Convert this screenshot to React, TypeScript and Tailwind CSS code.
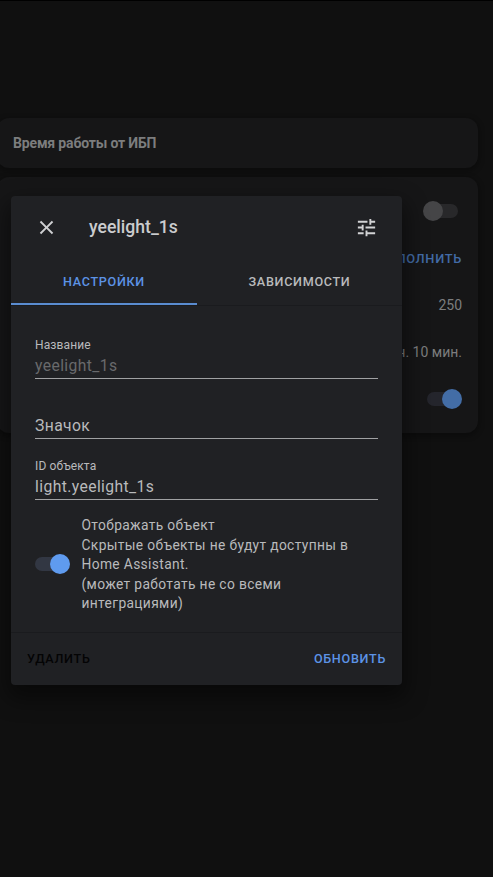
import React from "react";

type ToggleProps = { on: boolean; track: string; knob: string };

function Toggle({ on, track, knob }: ToggleProps) {
  return (
    <div className={`relative flex h-5 w-[35px] items-center ${on ? "justify-end" : "justify-start"}`}>
      <div
        className={`absolute h-3.5 w-[33px] rounded-full ${on ? "left-0" : "right-0"} ${track}`}
      />
      <div className={`relative size-5 rounded-full ${knob}`} />
    </div>
  );
}

type FieldProps = { label?: string; value: string; tone: string };

function Field({ label, value, tone }: FieldProps) {
  return (
    <div className="flex h-[53px] flex-col justify-end border-b border-[#a0a1a3] pb-[2px]">
      {label && (
        <div className="mb-[2px] text-[12px] leading-[18px] tracking-[0.12px] text-[#b9babc]">
          {label}
        </div>
      )}
      <div className={`text-[15.7px] leading-5 tracking-[0.4px] whitespace-nowrap ${tone}`}>
        {value}
      </div>
    </div>
  );
}

function Background() {
  return (
    <div className="flex flex-col gap-[9px] pt-[118px]">
      <section className="-ml-[3px] mr-[15px] flex h-[50px] items-center rounded-xl bg-[#161617] pl-4 shadow-[0_2px_5px_2px_rgba(0,0,0,0.25)]">
        <h2 className="text-[14px] font-bold leading-5 tracking-[-0.16px] text-[#7c7d7e]">
          Время работы от ИБП
        </h2>
      </section>
      <section className="-ml-[3px] mr-[15px] flex h-[256px] flex-col items-end rounded-xl bg-[#161617] pr-4 pt-[11px] text-[14px] text-[#7c7d7e] shadow-[0_2px_5px_2px_rgba(0,0,0,0.25)]">
        <div className="mr-1 flex h-[46px] items-center">
          <Toggle on={false} track="bg-[#28282a]" knob="bg-[#454547]" />
        </div>
        <div className="flex h-[48px] items-center pt-px text-[12.8px] font-medium tracking-[0.7px] text-[#426ba6]">
          ВЫПОЛНИТЬ
        </div>
        <div className="flex h-[47px] items-center">250</div>
        <div className="flex h-[47px] items-center">2 ч. 10 мин.</div>
        <div className="flex h-[46px] items-center">
          <Toggle on track="bg-[#24252c]" knob="bg-[#436da6]" />
        </div>
      </section>
    </div>
  );
}

function Dialog() {
  return (
    <div
      role="dialog"
      className="absolute left-[11px] top-[196px] flex h-[489px] w-[391px] flex-col rounded bg-[#202124] shadow-[0_10px_22px_4px_rgba(0,0,0,0.45)]"
    >
      <header className="flex h-[62px] items-center pl-[24px] pr-[24px]">
        <svg className="size-[23px]" viewBox="0 0 24 24" fill="#cfd0d2">
          <path d="M19,6.41L17.59,5L12,10.59L6.41,5L5,6.41L10.59,12L5,17.59L6.41,19L12,13.41L17.59,19L19,17.59L13.41,12L19,6.41Z" />
        </svg>
        <h1 className="ml-[31px] flex-1 text-[17.6px] font-medium leading-6 text-[#cbccce]">
          yeelight_1s
        </h1>
        <svg className="size-[23px]" viewBox="0 0 24 24" fill="#d2d3d5">
          <path d="M3,17V19H9V17H3M3,5V7H13V5H3M13,21V19H21V17H13V15H11V21H13M7,9V11H3V13H7V15H9V9H7M21,13V11H11V13H21M15,9H17V7H21V5H17V3H15V9Z" />
        </svg>
      </header>
      <nav className="flex h-[48px] border-b border-[#1a1b1e] text-[12.6px] font-medium tracking-[0.7px]">
        <div className="flex w-[186px] items-center justify-center border-b-2 border-[#5a8cd0] pt-[3px] text-[#5c93e6]">
          НАСТРОЙКИ
        </div>
        <div className="flex flex-1 items-center justify-center border-b-2 border-transparent pt-[3px] text-[#b9babc]">
          ЗАВИСИМОСТИ
        </div>
      </nav>
      <main className="flex flex-1 flex-col px-6 pt-[20px]">
        <Field label="Название" value="yeelight_1s" tone="text-[#696a6c]" />
        <div className="pt-[7px]">
          <Field value="Значок" tone="text-[#b9babc]" />
        </div>
        <div className="pt-2">
          <Field label="ID объекта" value="light.yeelight_1s" tone="text-[#b9babc]" />
        </div>
        <div className="mt-[16px] flex items-center">
          <div className="-mt-[2px]">
            <Toggle on track="bg-[#323743]" knob="bg-[#5f9bef]" />
          </div>
          <p className="ml-[11.5px] whitespace-nowrap text-[13.8px] leading-[19.6px] tracking-[0.35px] text-[#b9babc]">
            Отображать объект
            <br />
            Скрытые объекты не будут доступны в<br />
            Home Assistant.
            <br />
            (может работать не со всеми
            <br />
            интеграциями)
          </p>
        </div>
      </main>
      <footer className="flex h-[53px] items-center justify-between border-t border-[#1a1b1e] px-4 text-[12.6px] font-medium tracking-[0.7px]">
        <button className="text-[#040405]">УДАЛИТЬ</button>
        <button className="text-[#5c93e6]">ОБНОВИТЬ</button>
      </footer>
    </div>
  );
}

export default function App() {
  return (
    <div className="relative h-[877px] w-[493px] overflow-hidden border-t border-black bg-[#101010] font-['Roboto',sans-serif]">
      <div className="-mt-px">
        <Background />
      </div>
      <div className="absolute inset-x-0 -top-px">
        <Dialog />
      </div>
    </div>
  );
}
